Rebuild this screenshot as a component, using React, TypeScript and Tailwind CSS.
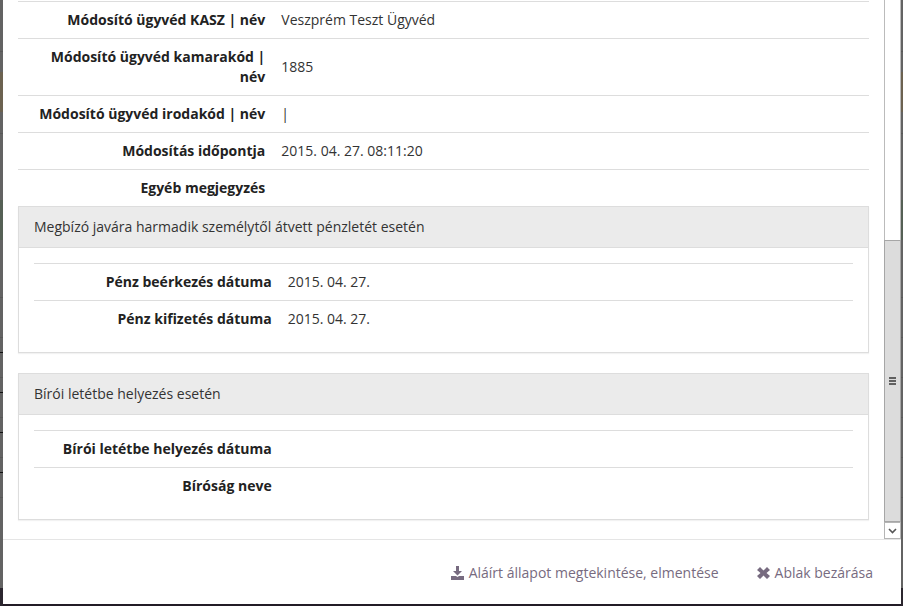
import React from 'react';

type Row = { label: string; value?: string };

const modificationRows: Row[] = [
  { label: 'Módosító ügyvéd KASZ | név', value: 'Veszprém Teszt Ügyvéd' },
  { label: 'Módosító ügyvéd kamarakód | név', value: '1885' },
  { label: 'Módosító ügyvéd irodakód | név', value: '|' },
  { label: 'Módosítás időpontja', value: '2015. 04. 27. 08:11:20' },
  { label: 'Egyéb megjegyzés' },
];

const depositRows: Row[] = [
  { label: 'Pénz beérkezés dátuma', value: '2015. 04. 27.' },
  { label: 'Pénz kifizetés dátuma', value: '2015. 04. 27.' },
];

const courtRows: Row[] = [
  { label: 'Bírói letétbe helyezés dátuma' },
  { label: 'Bíróság neve' },
];

const DetailTable = ({ rows }: { rows: Row[] }) => (
  <table className="w-full table-fixed border-collapse">
    <tbody>
      {rows.map((row) => (
        <tr key={row.label} className="border-t border-[#ddd]">
          <th scope="row" className="w-[30%] p-2 text-right font-bold text-[#222]">
            {row.label}
          </th>
          <td className="p-2 align-middle">{row.value}</td>
        </tr>
      ))}
    </tbody>
  </table>
);

const Panel = ({ title, rows }: { title: string; rows: Row[] }) => (
  <section className="border border-[#ddd] shadow-[0_1px_1px_rgba(0,0,0,0.05)]">
    <h3 className="border-b border-[#ddd] bg-[#ebebeb] px-[15px] py-[10px]">{title}</h3>
    <div className="p-[15px]">
      <DetailTable rows={rows} />
    </div>
  </section>
);

const Scrollbar = () => (
  <div className="flex w-[17px] shrink-0 flex-col" aria-hidden="true">
    <div className="h-60 border-x border-[#bbb] bg-white" />
    <div className="flex flex-1 flex-col items-center justify-center gap-px border border-[#a6a6a6] bg-[#dcdcdc]">
      <span className="h-0.5 w-[7px] bg-[#606060]" />
      <span className="h-0.5 w-[7px] bg-[#606060]" />
      <span className="h-0.5 w-[7px] bg-[#606060]" />
    </div>
    <button type="button" tabIndex={-1} className="flex h-[17px] items-center justify-center border border-[#b5b5b5] bg-white">
      <svg width="9" height="6" viewBox="0 0 9 6" fill="none" stroke="#555" strokeWidth="1.6">
        <path d="M1 1l3.5 3.5L8 1" />
      </svg>
    </button>
  </div>
);

// Dimmed page that shows on both sides of the dialog
const Backdrop = ({ marks = false }: { marks?: boolean }) => (
  <div className="flex flex-col bg-[#636363]">
    <div className="h-[52px] border-b border-[#585858]" />
    <div className="h-5" />
    <div className="h-10 bg-[#6c6250]" />
    <div className="h-[22px] border-b border-[#585858]" />
    <div className="h-[66px]" />
    <div className="h-10 bg-[#556055]" />
    <div className="h-[58px] border-b border-[#585858]" />
    <div className="h-10 border-b border-[#585858]" />
    {[0, 1, 2, 3].map((i) => (
      <div key={i} className="h-10 border-b border-[#585858] pt-[14px]">
        {marks && <div className="h-px bg-[#111]" />}
      </div>
    ))}
    <div className="flex-1" />
    <div className="h-[18px] bg-[#2b262e]" />
  </div>
);

export default function App() {
  return (
    <div className="grid min-h-screen grid-cols-[3px_1fr_2px] font-['Open_Sans',sans-serif] text-sm text-[#333]">
      <Backdrop marks />
      <div className="flex flex-col border-b-2 border-[#231c26] bg-white">
        <main className="flex flex-1">
          <div className="min-w-0 flex-1 px-[15px] pt-px pb-[19px]">
            <DetailTable rows={modificationRows} />
            <div className="flex flex-col gap-5">
              <Panel title="Megbízó javára harmadik személytől átvett pénzletét esetén" rows={depositRows} />
              <Panel title="Bírói letétbe helyezés esetén" rows={courtRows} />
            </div>
          </div>
          <Scrollbar />
        </main>
        <footer className="flex justify-end gap-3 border-t border-[#e5e5e5] px-[15px] pt-4 pb-[14px] text-[#776b80]">
          <button type="button" className="flex items-center gap-[5px] px-[13px] py-[7px]">
            <svg width="13" height="14" viewBox="0 0 13 14" fill="currentColor">
              <path d="M5 0h3v5h3L6.500 9.500 2 5h3zM0 10h5l1.500 1L8 10h5v4H0z" />
            </svg>
            Aláírt állapot megtekintése, elmentése
          </button>
          <button type="button" className="flex items-center gap-[5px] px-[13px] py-[7px]">
            <svg width="13" height="14" viewBox="0 0 13 14" fill="currentColor">
              <path d="M3 1l3.500 3.500L10 1l3 3-3.500 3L13 10l-3 3-3.500-3.500L3 13l-3-3L3.500 7 0 4z" />
            </svg>
            Ablak bezárása
          </button>
        </footer>
      </div>
      <Backdrop />
    </div>
  );
}
